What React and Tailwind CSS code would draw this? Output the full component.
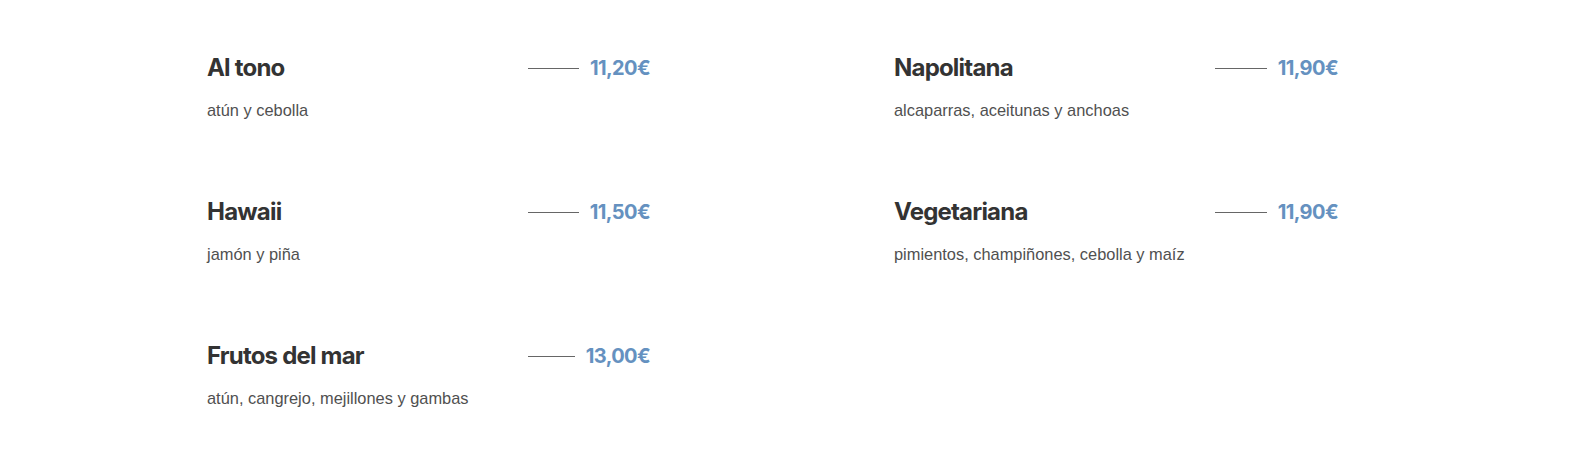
import React from 'react';

const items = [
  { name: 'Al tono', desc: 'atún y cebolla', price: '11,20€' },
  { name: 'Napolitana', desc: 'alcaparras, aceitunas y anchoas', price: '11,90€' },
  { name: 'Hawaii', desc: 'jamón y piña', price: '11,50€' },
  { name: 'Vegetariana', desc: 'pimientos, champiñones, cebolla y maíz', price: '11,90€' },
  { name: 'Frutos del mar', desc: 'atún, cangrejo, mejillones y gambas', price: '13,00€' },
];

const MenuItem = ({ name, desc, price }) => (
  <div className="flex flex-col">
    <div className="flex items-center h-8">
      <h3 className="w-[321px] shrink-0 text-[24px] font-bold tracking-[-0.8px] text-[#333333] font-['Inter',sans-serif]">
        {name}
      </h3>
      <span className="flex-1 h-px bg-[#666666]" />
      <span className="ml-[11px] text-[20px] font-bold tracking-[-0.6px] text-[#6591c0] font-['Inter',sans-serif]">
        {price}
      </span>
    </div>
    <p className="mt-[14px] text-[16.4px] leading-6 text-[#505050] font-['Liberation_Sans',Arial,sans-serif]">
      {desc}
    </p>
  </div>
);

export default function App() {
  return (
    <div className="w-full h-[475px] bg-white">
      <div className="pl-[207px] pt-[52px] grid grid-cols-[443px_444px] gap-x-[244px] gap-y-[74px]">
        {items.map((it) => (
          <MenuItem key={it.name} {...it} />
        ))}
      </div>
    </div>
  );
}
